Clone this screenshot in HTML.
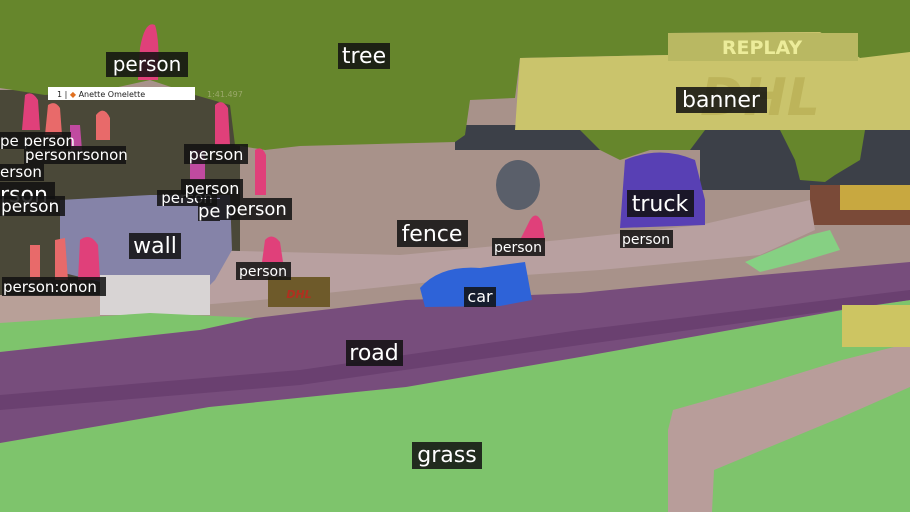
<!DOCTYPE html>
<html><head><meta charset="utf-8"><style>
html,body{margin:0;padding:0;background:#000;}
svg{display:block}
text{font-family:"DejaVu Sans","Liberation Sans",sans-serif;fill:#fff}
</style></head><body>
<svg width="910" height="512" viewBox="0 0 910 512" xmlns="http://www.w3.org/2000/svg">
<rect width="910" height="512" fill="#a8928a"/>
<rect x="0" y="90" width="240" height="210" fill="#4a4838"/>
<rect x="455" y="125" width="455" height="25" fill="#3c4048"/>
<rect x="700" y="125" width="210" height="65" fill="#3c4048"/>
<polygon points="810,185 910,185 910,225 810,225" fill="#7a4a38"/>
<rect x="840" y="185" width="70" height="25" fill="#c8a840"/>
<polygon points="0,0 910,0 910,55 860,58 820,32 668,33 668,55 520,58 515,98 470,100 465,135 455,142 300,146 265,150 235,145 230,105 195,95 150,80 105,90 45,95 0,88" fill="#66862c"/>
<polygon points="580,130 705,130 690,150 650,150 620,160 600,150" fill="#66862c"/>
<polygon points="780,130 865,130 860,160 835,175 825,182 800,180 795,160" fill="#66862c"/>
<polygon points="520,58 668,55 668,33 820,32 860,58 910,52 910,130 515,130" fill="#cac46c"/>
<rect x="668" y="33" width="190" height="28" fill="#b9b862"/>
<text x="762" y="54" font-size="19" font-weight="bold" style="fill:#ecec9a" text-anchor="middle">REPLAY</text>
<text x="760" y="115" font-size="52" font-weight="bold" font-style="italic" style="fill:#bdb45a" text-anchor="middle">DHL</text>
<polygon points="200,250 400,255 560,240 700,225 810,200 815,230 760,255 600,270 450,280 260,300 200,305" fill="#b8a0a0"/>
<ellipse cx="518" cy="185" rx="22" ry="25" fill="#5a5f6a"/>
<polygon points="60,200 150,195 230,195 232,250 215,280 195,300 170,282 100,282 60,272" fill="#8583a8"/>
<rect x="100" y="275" width="110" height="40" fill="#d8d4d4"/>
<rect x="0" y="295" width="100" height="30" fill="#b8a098"/>
<polygon points="0,330 0,512 910,512 910,300 842,310 580,357 406,387 209,407 0,443" fill="#7ec46c"/>
<polygon points="0,323 150,313 255,318 200,330 0,352" fill="#7ec46c"/>
<polygon points="745,262 810,235 830,230 840,250 800,262 760,272" fill="#86d083"/>
<polygon points="0,352 200,330 255,318 406,300 580,293 760,275 910,262 910,300 842,310 580,357 406,387 209,407 0,443" fill="#774d7c"/>
<polygon points="0,395 300,370 580,330 910,290 910,300 580,345 300,385 0,410" fill="#6a4070"/>
<polygon points="668,430 673,410 755,387 842,360 910,343 910,387 842,417 755,453 714,470 712,512 668,512" fill="#b89d9a"/>
<rect x="842" y="305" width="68" height="42" fill="#cdc562"/>
<rect x="268" y="277" width="62" height="30" fill="#6e5a2a"/>
<text x="299" y="298" font-size="11" font-weight="bold" font-style="italic" style="fill:#b03020" text-anchor="middle">DHL</text>
<path d="M625,160 Q660,145 695,160 L705,200 L705,225 L620,228 Z" fill="#5840b4"/>
<path d="M420,288 Q440,265 480,268 L525,262 L532,300 L500,306 L425,307 Z" fill="#2e63d8"/>
<g fill="#e0407a">
<path d="M140,48 Q145,20 155,25 Q160,40 158,80 L138,80 Z"/>
<path d="M215,105 Q222,98 228,108 L230,145 L215,145 Z"/>
<path d="M255,150 Q262,145 266,155 L266,195 L255,195 Z"/>
<path d="M80,240 Q90,232 98,245 L100,280 L78,280 Z"/>
<path d="M25,95 Q32,90 38,100 L40,130 L22,130 Z"/>
<path d="M530,220 Q536,210 542,222 L545,240 L520,240 Z"/>
<path d="M265,240 Q272,232 280,242 L283,262 L262,262 Z"/>
</g>
<g fill="#e86a6a">
<path d="M48,105 Q55,100 60,108 L62,135 L45,135 Z"/>
<path d="M55,240 L65,238 L68,280 L55,280 Z"/>
<path d="M30,245 L40,245 L40,280 L30,280 Z"/>
<path d="M96,115 Q104,105 110,118 L110,140 L96,140 Z"/>
</g>
<g fill="#c04aa0"><path d="M70,125 L80,125 L82,150 L70,150 Z"/><path d="M190,150 L205,150 L205,180 L190,180 Z"/></g>
<rect x="48" y="87" width="147" height="13" fill="#fff"/>
<text x="57" y="97" font-size="8" style="fill:#222">1 | <tspan style="fill:#e07020">◆</tspan> Anette Omelette</text>
<text x="207" y="97" font-size="8" style="fill:#9aa86a">1:41.497</text>
<g>
<rect x="106" y="52" width="82" height="25" fill="#111" opacity="0.85"/><text x="147" y="71" font-size="20" text-anchor="middle">person</text>
<rect x="338" y="43" width="52" height="26" fill="#111" opacity="0.85"/><text x="364" y="63" font-size="22" text-anchor="middle">tree</text>
<rect x="676" y="87" width="91" height="26" fill="#111" opacity="0.85"/><text x="721" y="107" font-size="22" text-anchor="middle">banner</text>
<rect x="627" y="190" width="67" height="27" fill="#111" opacity="0.85"/><text x="660" y="211" font-size="22" text-anchor="middle">truck</text>
<rect x="397" y="220" width="71" height="27" fill="#111" opacity="0.85"/><text x="432" y="241" font-size="22" text-anchor="middle">fence</text>
<rect x="129" y="233" width="52" height="26" fill="#111" opacity="0.85"/><text x="155" y="253" font-size="22" text-anchor="middle">wall</text>
<rect x="346" y="340" width="57" height="26" fill="#111" opacity="0.85"/><text x="374" y="360" font-size="22" text-anchor="middle">road</text>
<rect x="412" y="442" width="70" height="27" fill="#111" opacity="0.85"/><text x="447" y="462" font-size="22" text-anchor="middle">grass</text>
<rect x="464" y="287" width="32" height="20" fill="#111" opacity="0.85"/><text x="480" y="302" font-size="16" text-anchor="middle">car</text>
<rect x="492" y="238" width="53" height="18" fill="#111" opacity="0.85"/><text x="518" y="252" font-size="14" text-anchor="middle">person</text>
<rect x="620" y="230" width="53" height="18" fill="#111" opacity="0.85"/><text x="646" y="244" font-size="14" text-anchor="middle">person</text>
<rect x="236" y="262" width="55" height="18" fill="#111" opacity="0.85"/><text x="263" y="276" font-size="14" text-anchor="middle">person</text>
<rect x="184" y="144" width="64" height="20" fill="#111" opacity="0.85"/><text x="216" y="160" font-size="16" text-anchor="middle">person</text>
<rect x="157" y="190" width="60" height="16" fill="#111" opacity="0.85"/><text x="187" y="203" font-size="15" text-anchor="middle">person</text>
<rect x="181" y="179" width="62" height="19" fill="#111" opacity="0.85"/><text x="212" y="194" font-size="16" text-anchor="middle">person</text>
<rect x="198" y="199" width="22" height="22" fill="#111" opacity="0.85"/><text x="198" y="217" font-size="18">pe</text>
<rect x="220" y="198" width="72" height="22" fill="#111" opacity="0.85"/><text x="256" y="215" font-size="18" text-anchor="middle">person</text>
<rect x="0" y="132" width="71" height="17" fill="#111" opacity="0.85"/><text x="0" y="146" font-size="15">pe person</text>
<rect x="24" y="146" width="102" height="18" fill="#111" opacity="0.85"/><text x="25" y="160" font-size="15">personrsonon</text>
<rect x="0" y="164" width="44" height="17" fill="#111" opacity="0.85"/><text x="0" y="177" font-size="15">erson</text>
<rect x="0" y="182" width="55" height="17" fill="#111" opacity="0.85"/><text x="0" y="202" font-size="22">rson</text>
<rect x="0" y="196" width="65" height="20" fill="#111" opacity="0.85"/><text x="1" y="212" font-size="17">person</text>
<rect x="2" y="277" width="104" height="19" fill="#111" opacity="0.85"/><text x="3" y="292" font-size="15">person<tspan>:onon</tspan></text>
</g>
</svg>
</body></html>
